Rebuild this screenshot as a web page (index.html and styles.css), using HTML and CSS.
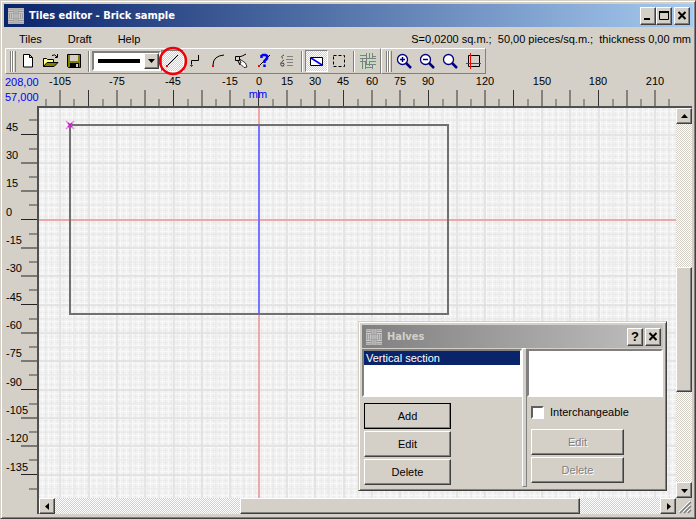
FILE: index.html
```
<!DOCTYPE html>
<html lang="en">
<head>
<meta charset="utf-8">
<title>Tiles editor - Brick sample</title>
<link rel="stylesheet" href="styles.css">
</head>
<body>
<svg class="defs" width="0" height="0" aria-hidden="true">
  <symbol id="brick" viewBox="0 0 16 16">
    <path d="M0 .8h5M0 2.700h5M0 4.600h5M11 .8h5M11 2.700h5M11 4.600h5M5.500 6.100h5M5.500 8h5M5.500 9.900h5M0 11.400h5M0 13.300h5M0 15.200h5M11 11.400h5M11 13.300h5M11 15.200h5M6.100 0v5M8 0v5M9.900 0v5M.8 5.500v5M2.700 5.500v5M4.600 5.500v5M11.400 5.500v5M13.300 5.500v5M15.200 5.500v5M6.100 11v5M8 11v5M9.900 11v5" fill="none" stroke="currentColor" stroke-width="1.300"/>
  </symbol>
  <symbol id="lens" viewBox="0 0 16 16">
    <circle cx="6.500" cy="6.500" r="5" fill="#fff" stroke="#000080" stroke-width="1.300"/>
    <path d="M10 10l5 5" stroke="#000080" stroke-width="2.500"/>
  </symbol>
</svg>
<main class="window">
  <header class="titlebar">
    <svg class="app-icon"><use href="#brick"/></svg>
    <h1>Tiles editor - Brick sample</h1>
    <div class="controls">
      <button class="btn caption" aria-label="Minimize"><svg viewBox="0 0 12 10"><path d="M2 8h6" stroke="#000" stroke-width="2"/></svg></button><button class="btn caption" aria-label="Maximize"><svg viewBox="0 0 12 10"><path d="M1.500 1v7.500h9V1" fill="none" stroke="#000"/><path d="M1 1h10" stroke="#000" stroke-width="2"/></svg></button><button class="btn caption close" aria-label="Close"><svg viewBox="0 0 12 10"><path d="M2.500 1l7 7M9.500 1l-7 7" stroke="#000" stroke-width="2"/></svg></button>
    </div>
  </header>
  <nav class="menubar">
    <a href="#">Tiles</a><a href="#">Draft</a><a href="#">Help</a>
    <p class="status">S=0,0200 sq.m.;&nbsp; 50,00 pieces/sq.m.;&nbsp; thickness 0,00 mm</p>
  </nav>
  <div class="toolbars">
    <div class="toolbar main-tools">
      <span class="grip"></span>
      <button class="tool" aria-label="New"><svg viewBox="0 0 16 16"><path d="M3.500 1.500h6l3 3v9.500h-9zM9.500 1.500v3h3" fill="#fff" stroke="#000"/></svg></button>
      <button class="tool" aria-label="Open"><svg viewBox="0 0 16 16"><path d="M.5 13.500v-8h3l1 1h6v3" fill="#ffff80" stroke="#000"/><path d="M.5 13.500l3.500-4h11l-4 4z" fill="#808000" stroke="#000"/><path d="M9 2.500q3-2 5 1.500M14.500 1v3.500H12" fill="none" stroke="#000"/></svg></button>
      <button class="tool" aria-label="Save"><svg viewBox="0 0 16 16"><path d="M1.500 1.500h13v13h-12l-1-1z" fill="#808000" stroke="#000"/><path d="M4 2h8v6H4z" fill="#d4d0c8"/><path d="M4 10h9v4H4z" fill="#000"/><path d="M10 11h2v3h-2z" fill="#d4d0c8"/></svg></button>
      <span class="divider"></span>
      <button class="line-style" aria-label="Line style"><span class="sample"></span><span class="btn drop"><svg viewBox="0 0 7 4"><path d="M0 0h7L3.500 4z"/></svg></span></button>
      <button class="tool pressed line-tool" aria-label="Line"><svg viewBox="0 0 16 16"><path d="M3 13L14 2" stroke="#000"/><path d="M2 12h2v2H2z" fill="red"/></svg><svg class="highlight" viewBox="0 0 30 30"><circle cx="15" cy="15" r="13" fill="none" stroke="#f00008" stroke-width="2.500"/></svg></button>
      <button class="tool" aria-label="Polyline"><svg viewBox="0 0 16 16"><path d="M4.500 12V7.500h7V2" fill="none" stroke="#000"/><path d="M3 12.500h3M4.500 11v3" stroke="red"/></svg></button>
      <button class="tool" aria-label="Arc"><svg viewBox="0 0 16 16"><path d="M3 12q0-9 11-10" fill="none" stroke="#000"/><path d="M2 12h2v2H2z" fill="red"/></svg></button>
      <button class="tool" aria-label="Select node"><svg viewBox="0 0 16 16"><path d="M6 4q4-1 7-3M4 6l3 6" fill="none" stroke="#000"/><path d="M2.500 3.500h4v4h-4z" fill="#d4d0c8" stroke="#000"/><path d="M6.500 6l6 4 1.500 4-3 .5-3-3-2-1 2-.5z" fill="#fff" stroke="#000" stroke-width=".8"/></svg></button>
      <button class="tool" aria-label="Query line"><svg viewBox="0 0 16 16"><path d="M3 13L14 2" stroke="#000"/><path d="M2 12h2v2H2z" fill="red"/><path d="M5.500 5V3l1.500-1h2.500l1.500 1v2.500L8.500 8v2M8.500 11.500V14" fill="none" stroke="#00f" stroke-width="2.500"/></svg></button>
      <button class="tool" aria-label="Properties"><svg viewBox="0 0 16 16"><path d="M5 2q-4 1.500-1 3.500M5 7q-5 3-2.500 6 2.500 1 2.500-1.500t-2.500-1" fill="none" stroke="#404040"/><path d="M8 3.500h6M7 6.500h7M8 9.500h6M8 12.500h6" stroke="#808080"/></svg></button>
      <span class="divider"></span>
      <button class="tool pressed" aria-label="Show halves"><svg viewBox="0 0 16 16"><path d="M2.500 4.500h12v8h-12z" fill="#fff" stroke="#000"/><path d="M3 5l11 7" stroke="#00f" stroke-width="1.500"/></svg></button>
      <button class="tool" aria-label="Select area"><svg viewBox="0 0 16 16"><path d="M2.500 2.500h11v11h-11z" fill="none" stroke="#000" stroke-dasharray="3 2"/></svg></button>
      <span class="divider"></span>
      <button class="tool pattern-tool" aria-label="Pattern"><svg viewBox="0 0 16 16"><path d="M0 0h16v16H0z" fill="#c4dcc4"/><path d="M0 2.500h6M0 5.500h16M6.500 0v11M9.500 0v6M12.500 0v5M12.500 3.500H16M0 8.500h6M2.500 5v11M5.500 9v7M9.500 8.500H16M9.500 8v5M6 11.500h10M12.500 12v4M6 14.500h6" fill="none" stroke="#808080"/></svg></button>
    </div>
    <div class="toolbar">
      <span class="grip"></span>
      <button class="tool" aria-label="Zoom in"><svg viewBox="0 0 16 16"><use href="#lens"/><path d="M4 6.500h5M6.500 4v5" stroke="#000080" stroke-width="1.500"/></svg></button>
      <button class="tool" aria-label="Zoom out"><svg viewBox="0 0 16 16"><use href="#lens"/><path d="M4 6.500h5" stroke="#000080" stroke-width="1.500"/></svg></button>
      <button class="tool" aria-label="Zoom"><svg viewBox="0 0 16 16"><use href="#lens"/></svg></button>
      <button class="tool" aria-label="Fit"><svg viewBox="0 0 16 16"><path d="M3.500 2.500h11v11h-11z" fill="none" stroke="#000"/><path d="M1 10.500h15M5.500 0v16" stroke="red"/></svg></button>
    </div>
  </div>
  <section class="workspace">
    <div class="coords"><span>208,00</span><span>57,000</span></div>
    <svg class="ruler-x" aria-label="Horizontal ruler">
      <defs><pattern id="tx" width="85" height="34" x="221" patternUnits="userSpaceOnUse">
        <path d="M.5 16v17M29 16v17M57 16v17" stroke="#333"/><path d="M15 25v8M43 25v8M71 25v8" stroke="#555"/></pattern></defs>
      <rect x="5" width="630" height="33" fill="url(#tx)"/>
      <g text-anchor="middle"><text x="23" y="11">-105</text><text x="80" y="11">-75</text><text x="136" y="11">-45</text><text x="193" y="11">-15</text><text x="222" y="11">0</text><text x="250" y="11">15</text><text x="278" y="11">30</text><text x="306" y="11">45</text><text x="335" y="11">60</text><text x="363" y="11">75</text><text x="391" y="11">90</text><text x="448" y="11">120</text><text x="505" y="11">150</text><text x="561" y="11">180</text><text x="618" y="11">210</text><text class="unit" x="221" y="24">mm</text></g>
    </svg>
    <svg class="ruler-y" aria-label="Vertical ruler">
      <defs><pattern id="ty" width="34" height="85" y="113" patternUnits="userSpaceOnUse">
        <path d="M17 .5h16M17 29h16M17 57h16" stroke="#222"/><path d="M25 15h8M25 43h8M25 71h8" stroke="#444"/></pattern></defs>
      <rect y="12" width="33" height="372" fill="url(#ty)"/>
      <g><text x="2" y="25">45</text><text x="2" y="53">30</text><text x="2" y="81">15</text><text x="2" y="110">0</text><text x="2" y="138">-15</text><text x="2" y="166">-30</text><text x="2" y="195">-45</text><text x="2" y="223">-60</text><text x="2" y="251">-75</text><text x="2" y="280">-90</text><text x="2" y="308">-105</text><text x="2" y="336">-120</text><text x="2" y="365">-135</text></g>
    </svg>
    <div class="view">
      <svg class="drawing" aria-label="Tile outline">
        <defs>
          <pattern id="fine" width="6" height="6" patternUnits="userSpaceOnUse"><path d="M0 .5h6M.5 0v6" stroke="#ebebeb"/><path d="M0 3.500h6M3.500 0v6" stroke="#f8f8f8"/></pattern>
          <pattern id="coarse" width="85" height="85" x="219" y="111" patternUnits="userSpaceOnUse"><path d="M0 1h85M0 29h85M0 57h85M1 0v85M29 0v85M57 0v85" stroke="#dfdfdf" stroke-width="1.500"/><path d="M0 15h85M0 43h85M0 71h85M15 0v85M43 0v85M71 0v85" stroke="#e6e6e6"/></pattern>
        </defs>
        <rect width="100%" height="100%" fill="#f2f2f2"/><rect width="100%" height="100%" fill="url(#fine)"/><rect width="100%" height="100%" fill="url(#coarse)"/>
        <path d="M0 112h2000M220 0v2000" stroke="#eaa8a8" stroke-width="2"/>
        <path d="M31 17h378v189H31z" fill="none" stroke="#707070" stroke-width="2"/>
        <path d="M220 18v187" stroke="#7474ff" stroke-width="2"/>
        <path d="M27 13l8 8M35 13l-8 8" stroke="#ee82ee" stroke-width="1.500"/><path d="M29 15l4 4M33 15l-4 4" stroke="#c020c0" stroke-width="1.500"/>
      </svg>
      <div class="scroll vertical"><button class="btn arrow" aria-label="Up"><svg viewBox="0 0 7 7"><path d="M0 5h7L3.500 1z"/></svg></button><span class="before"></span><span class="btn thumb"></span><span class="after"></span><button class="btn arrow" aria-label="Down"><svg viewBox="0 0 7 7"><path d="M0 2h7L3.500 6z"/></svg></button></div>
      <div class="scroll horizontal"><button class="btn arrow" aria-label="Left"><svg viewBox="0 0 7 7"><path d="M5 0v7L1 3.500z"/></svg></button><span class="before"></span><span class="btn thumb"></span><span class="after"></span><button class="btn arrow" aria-label="Right"><svg viewBox="0 0 7 7"><path d="M2 0v7l4-3.500z"/></svg></button></div>
      <svg class="size-grip" viewBox="0 0 16 16"><path d="M4 15L15 4M8 15l7-7M12 15l3-3" stroke="#808080" stroke-width="1.500"/><path d="M3 14L14 3M7 14l7-7M11 14l3-3" stroke="#fff"/></svg>
    </div>
  </section>
  <section class="dialog" role="dialog" aria-label="Halves">
    <header class="titlebar inactive">
      <svg class="app-icon"><use href="#brick"/></svg><h2>Halves</h2>
      <div class="controls"><button class="btn caption help">?</button><button class="btn caption close" aria-label="Close"><svg viewBox="0 0 12 10"><path d="M2.500 1l7 7M9.500 1l-7 7" stroke="#000" stroke-width="2"/></svg></button></div>
    </header>
    <div class="panes">
      <div class="pane sections">
        <ul class="list"><li>Vertical section</li></ul>
        <div class="actions"><button class="btn push default">Add</button><button class="btn push">Edit</button><button class="btn push">Delete</button></div>
      </div>
      <span class="splitter"></span>
      <div class="pane variants">
        <ul class="list"></ul>
        <div class="actions"><label class="check"><input type="checkbox">Interchangeable</label><button class="btn push" disabled>Edit</button><button class="btn push" disabled>Delete</button></div>
      </div>
    </div>
  </section>
</main>
</body>
</html>
```
FILE: styles.css
```
* { box-sizing: border-box; }
body { margin: 0; background: #d4d0c8; color: #000; font: 11px/14px "Liberation Sans", Arial, sans-serif; }
button { margin: 0; padding: 0; color: inherit; font: inherit; }
h1, h2, p, ul { margin: 0; padding: 0; list-style: none; }
svg { display: block; }
.defs { position: absolute; }
.window { position: relative; display: flex; flex-direction: column; height: 100vh; padding: 3px 2px 3px 3px; background: #d4d0c8; border: 1px solid #d4d0c8; border-right-color: #404040; border-bottom-color: #404040; box-shadow: inset 1px 1px #fff, inset -1px -1px #808080; }
.btn { display: flex; align-items: center; justify-content: center; background: #d4d0c8; border: 1px solid; border-color: #fff #404040 #404040 #fff; border-radius: 0; box-shadow: inset -1px -1px #808080; }
.titlebar { display: flex; align-items: center; flex: none; height: 23px; padding: 0 3px 0 4px; background: linear-gradient(90deg, #0a246a, #a6caf0); color: #fff; }
.titlebar h1, .titlebar h2 { margin-left: 5px; font: bold 11px/14px "DejaVu Sans Condensed", "DejaVu Sans", sans-serif; }
.app-icon { width: 16px; height: 16px; background: #808080; color: #c8c8c8; }
.controls { display: flex; margin-left: auto; }
.caption { width: 16px; height: 18px; }
.caption svg { width: 12px; height: 10px; }
.close { margin-left: 2px; }
.menubar { display: flex; align-items: center; flex: none; height: 21px; padding: 3px 2px 0 15px; gap: 26px; }
.menubar a { color: inherit; text-decoration: none; }
.status { margin-left: auto; }
.toolbars { display: flex; flex: none; height: 26px; margin-left: 1px; }
.toolbar { display: flex; align-items: center; padding: 0 0 0 4px; border: 1px solid; border-color: #fff #808080 #808080 #fff; }
.grip { flex: none; width: 6px; height: 21px; margin-right: 1px; border: 1px solid; border-color: #fff #808080; border-width: 0 1px; background: linear-gradient(90deg, #d4d0c8 1px, #808080 1px 2px, #fff 2px 3px, #d4d0c8 3px); box-shadow: inset 1px 0 #fff; }
.divider { flex: none; width: 2px; height: 21px; margin: 0 2px; border-left: 1px solid #808080; border-right: 1px solid #fff; }
.tool { flex: none; width: 23px; height: 22px; padding: 3px; border: 0; background: none; }
.tool svg { width: 16px; height: 16px; }
.pressed { background: repeating-conic-gradient(#fff 0 25%, #d4d0c8 0 50%) 0 0 / 2px 2px; border: 1px solid; border-color: #808080 #fff #fff #808080; padding: 2px; }
.line-tool { position: relative; }
.line-tool .highlight { position: absolute; inset: -5px -4px; width: 30px; height: 30px; z-index: 2; }
.line-style { display: flex; flex: none; align-items: center; width: 69px; height: 20px; background: #fff; border: 2px solid; border-color: #808080 #fff #fff #808080; }
.sample { flex: 1; height: 4px; margin: 0 4px; background: #000; }
.drop { width: 15px; height: 16px; }
.drop svg { width: 7px; height: 4px; }
.workspace { display: grid; flex: 1; min-height: 0; grid-template: 32px 1fr / 33px 1fr; margin: 0 1px 1px 0; }
.coords { display: flex; flex-direction: column; gap: 1px; padding: 1px; color: #00f; }
.ruler-x, .ruler-y { width: 100%; height: 100%; overflow: visible; }
.unit { fill: #00f; }
.view { display: grid; grid-template: 1fr 16px / 1fr 16px; min-width: 0; border: 2px solid #505050; border-right: 0; border-bottom: 0; }
.drawing { width: 100%; height: 100%; }
.scroll { display: flex; background: repeating-conic-gradient(#fff 0 25%, #d4d0c8 0 50%) 0 0 / 2px 2px; }
.vertical { flex-direction: column; }
.arrow { flex: none; width: 16px; height: 16px; }
.arrow svg { width: 7px; height: 7px; }
.vertical .before { flex: 144; }
.vertical .thumb { flex: 123; }
.vertical .after { flex: 91; }
.horizontal .before { flex: 186; }
.horizontal .thumb { flex: 340; }
.horizontal .after { flex: 80; }
.dialog { position: absolute; right: 28px; bottom: 27px; width: 309px; padding: 3px; background: #d4d0c8; border: 1px solid; border-color: #d4d0c8 #404040 #404040 #d4d0c8; box-shadow: inset 1px 1px #fff, inset -1px -1px #808080; }
.inactive { padding-right: 2px; background: linear-gradient(90deg, #808080, #c0c0c0); color: #d4d0c8; }
.help { font-weight: bold; font-size: 13px; color: #000; }
.panes { display: flex; height: 139px; }
.sections { flex: none; width: 160px; }
.variants { flex: 1; }
.list { height: 48px; margin-top: 1px; background: #fff; border: 2px solid; border-color: #808080 #fff #fff #808080; }
.list li { padding: 0 2px; background: #0a246a; color: #fff; }
.splitter { width: 5px; border: 1px solid; border-color: #fff #808080 #808080 #fff; }
.actions { display: flex; flex-direction: column; align-items: flex-start; gap: 2px; padding: 6px 2px; }
.variants .actions { padding-left: 4px; }
.push { width: 87px; height: 26px; }
.variants .push { width: 93px; }
.default { outline: 1px solid #000; outline-offset: -1px; }
.push:disabled { color: #808080; text-shadow: 1px 1px #fff; }
.check { display: flex; align-items: center; gap: 6px; height: 18px; margin-bottom: 6px; }
.check input { appearance: none; width: 13px; height: 13px; margin: 0; background: #fff; border: 2px solid; border-color: #606060 #fff #fff #606060; }
```
